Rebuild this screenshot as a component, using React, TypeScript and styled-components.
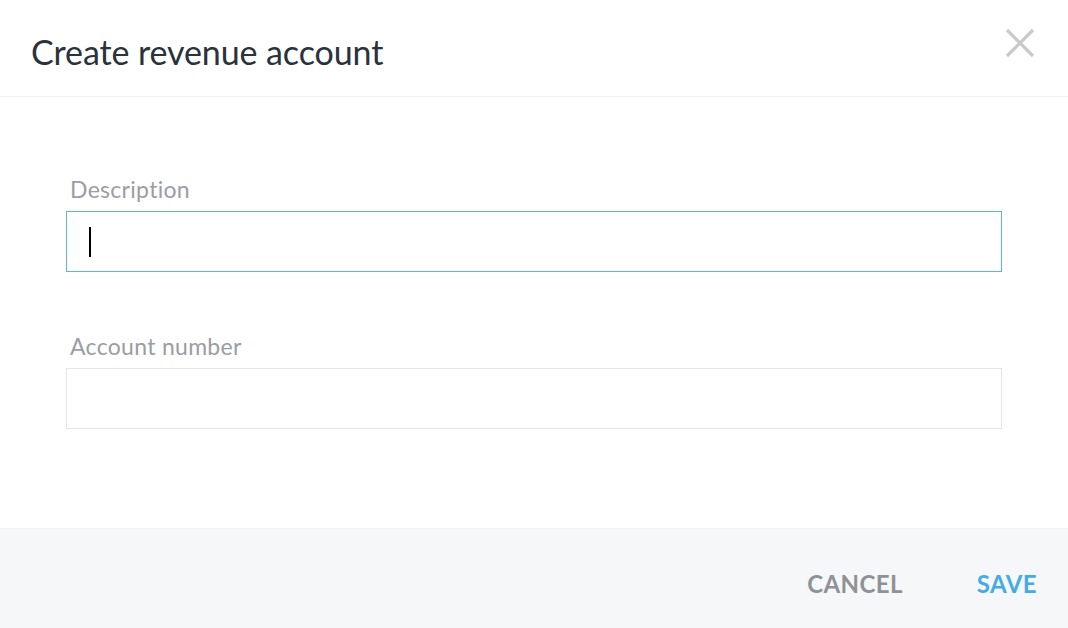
import React from 'react';
import styled, { createGlobalStyle } from 'styled-components';

const GlobalStyle = createGlobalStyle`
  html, body {
    margin: 0;
    padding: 0;
    background: #ffffff;
  }
  body {
    font-family: Lato, "Liberation Sans", sans-serif;
  }
`

const Modal = styled.div`
  width: 1068px;
  height: 628px;
  display: flex;
  flex-direction: column;
  background: #fff;
`

const Header = styled.header`
  height: 97px;
  flex-shrink: 0;
  display: flex;
  align-items: center;
  justify-content: space-between;
  padding: 6px 32px 0 31px;
  box-sizing: border-box;
  border-bottom: 1px solid #eef0f2;
`

const Title = styled.h1`
  margin: 0;
  font-size: 34px;
  font-weight: 400;
  color: #2a323b;
  letter-spacing: -0.1px;
`

const CloseButton = styled.button`
  align-self: flex-start;
  border: none;
  background: none;
  padding: 0;
  width: 32px;
  height: 32px;
  margin-top: 21px;
  cursor: pointer;
  display: flex;
  align-items: center;
  justify-content: center;
`

const Body = styled.div`
  flex: 1;
  padding: 78px 66px 0;
  display: flex;
  flex-direction: column;
  gap: 60px;
`

const Field = styled.div`
  display: flex;
  flex-direction: column;
`

const Label = styled.label`
  font-size: 23px;
  color: #9a9da2;
  padding-left: 4px;
  margin-bottom: 8px;
  line-height: 28px;
  letter-spacing: 0.3px;
`

const Input = styled.div<{ $focused?: boolean }>`
  width: 936px;
  height: 61px;
  box-sizing: border-box;
  border: 1px solid ${p => (p.$focused ? '#5ab7e2' : '#e2e6e8')};
  background: #fff;
  display: flex;
  align-items: center;
  padding-left: 22px;
`

const Caret = styled.span`
  width: 2px;
  height: 30px;
  background: #000;
  margin-top: 1px;
`

const Footer = styled.footer`
  height: 100px;
  flex-shrink: 0;
  background: #f6f7f9;
  border-top: 1px solid #eef0f2;
  box-sizing: border-box;
  display: flex;
  align-items: center;
  justify-content: flex-end;
  gap: 74px;
  padding: 10px 31px 0 0;
`

const ActionButton = styled.button<{ $primary?: boolean }>`
  border: none;
  background: none;
  padding: 0;
  font-family: Lato, "Liberation Sans", sans-serif;
  font-size: 24px;
  font-weight: 700;
  letter-spacing: 0.4px;
  color: ${p => (p.$primary ? '#46abe0' : '#8e9196')};
  cursor: pointer;
`

const App = () => {
  return (
    <>
      <GlobalStyle />
      <Modal>
        <Header>
          <Title>Create revenue account</Title>
          <CloseButton aria-label="Close">
            <svg width="30" height="30" viewBox="0 0 30 30">
              <path d="M2 2 L28 28 M28 2 L2 28" stroke="#cacaca" strokeWidth="3.2" />
            </svg>
          </CloseButton>
        </Header>
        <Body>
          <Field>
            <Label>Description</Label>
            <Input $focused>
              <Caret />
            </Input>
          </Field>
          <Field>
            <Label>Account number</Label>
            <Input />
          </Field>
        </Body>
        <Footer>
          <ActionButton>CANCEL</ActionButton>
          <ActionButton $primary>SAVE</ActionButton>
        </Footer>
      </Modal>
    </>
  )
}

export default App;
